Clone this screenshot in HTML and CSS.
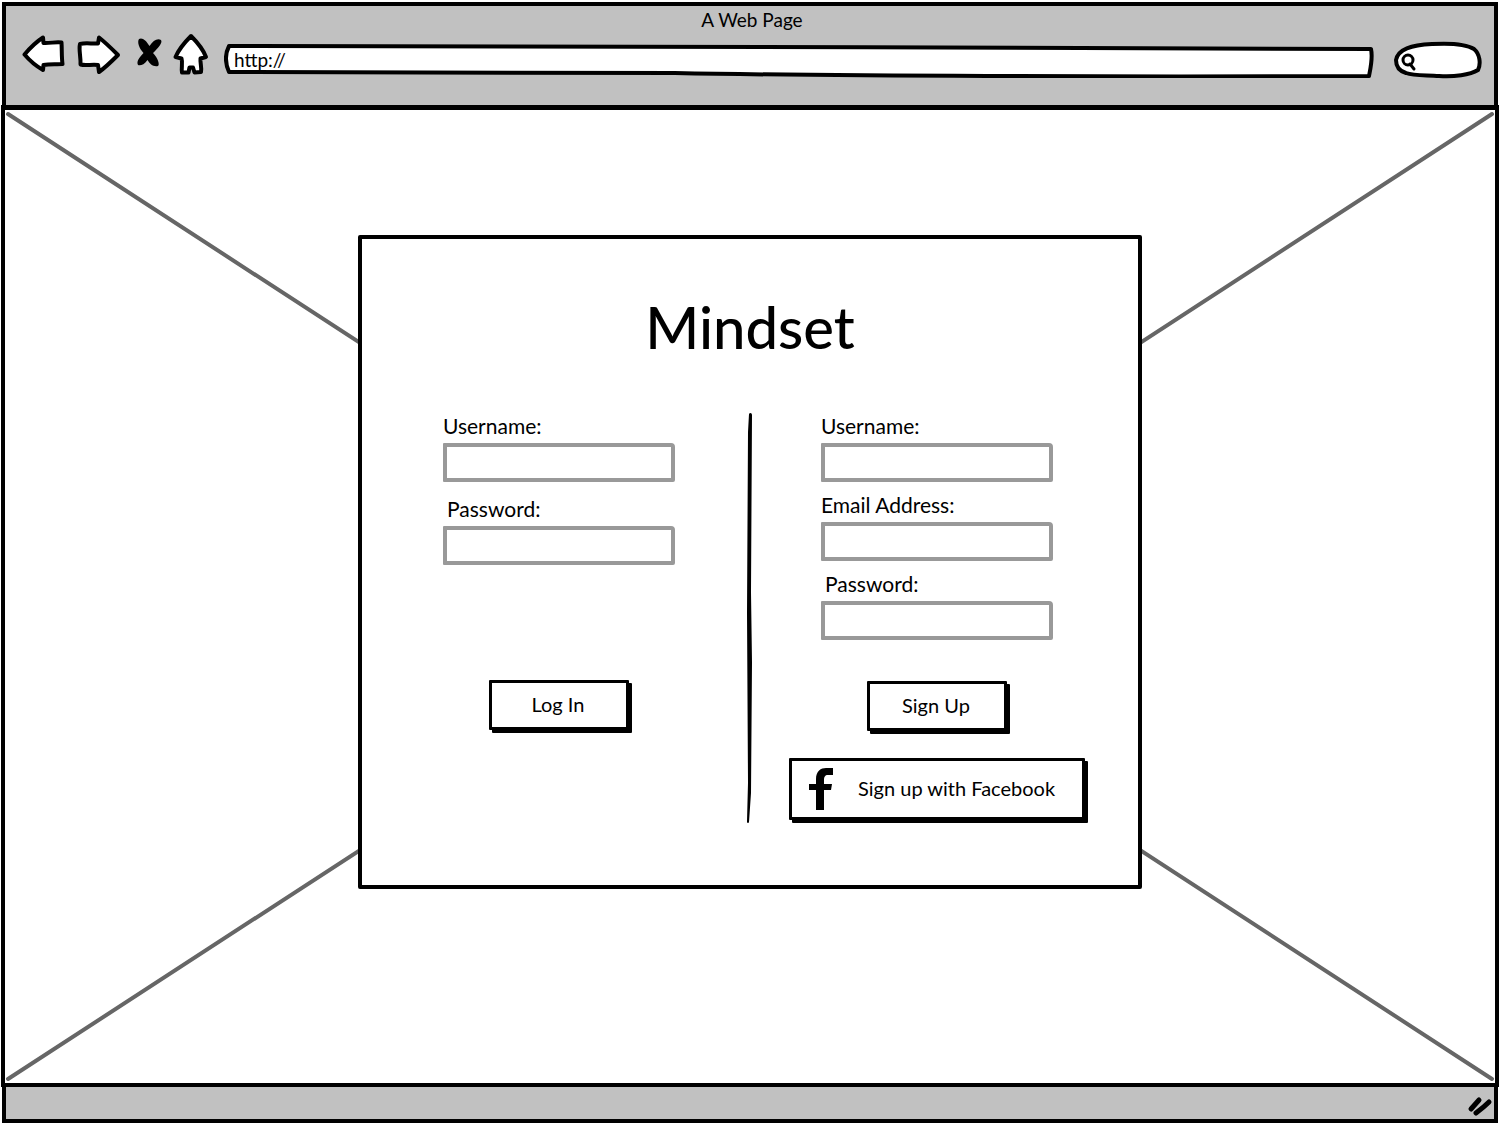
FILE: index.html
```html
<!DOCTYPE html>
<html lang="en">
<head>
  <meta charset="UTF-8" />
  <meta name="viewport" content="width=device-width, initial-scale=1" />
  <title>Mindset</title>
  <link rel="stylesheet" href="styles.css">
</head>
<body>
  <header class="browser-bar">
    <div class="page-title">A Web Page</div>
    <div class="toolbar">
      <nav class="nav-buttons">
        <button type="button" class="nav-btn" aria-label="Back">
          <svg width="46" height="48" viewBox="0 0 46 48">
            <path class="outline" d="M2.5 22.5C8 16 14 10 21 5.5L21.5 11C28 11.500 34 9.500 39.500 10.500C40 18 39.500 25 40.500 32C34.500 32.500 28 31.500 21.500 33L21 38C14 34 8 29 2.500 22.500Z" />
          </svg>
        </button>
        <button type="button" class="nav-btn" aria-label="Forward">
          <svg width="46" height="48" viewBox="0 0 46 48">
            <path class="outline" d="M4 12C10 10.500 16 12 22 11.500L23 5.500C30 11 36 17 42 23C36 29 30 35 23 40L22 33C16 32 10 34 4.500 32.500C5 25 2.500 18 4 12Z" />
          </svg>
        </button>
        <button type="button" class="nav-btn" aria-label="Stop">
          <svg width="34" height="48" viewBox="0 0 34 48">
            <path d="M9 7C12 5 16 8 19.500 14C23 9 27 6 31 8C33 11 28 16 23 21C28 26 30 33 28 34C23 35 20 32 17.500 28C14 33 10 34 8 33C6 29 10 25 13.500 21C9 16 7 10 9 7Z" />
          </svg>
        </button>
        <button type="button" class="nav-btn" aria-label="Home">
          <svg width="40" height="48" viewBox="0 0 40 48">
            <path class="outline" d="M19 4C25 10 31 17 34 25L28.500 26.500C28 31 30 36 29 40L22.500 40.500L21 35.500L17.500 35.500L16.500 40.500L10 40.500C9 36 11 31 9.500 26.500L3.500 25C7 17 13 10 19 4Z" />
          </svg>
        </button>
      </nav>
      <div class="url-bar">
        <svg class="sketch" viewBox="0 0 1148 34" preserveAspectRatio="none">
          <path class="outline" d="M5 2C300 3 800 3 1145 5C1147 14 1145 22 1143 32C900 33 600 32 450 29C300 28 150 28 5 28C1 19 1 10 5 2Z" />
        </svg>
        <input type="text" value="http://" aria-label="Address" />
      </div>
      <div class="search-bar">
        <svg class="sketch" viewBox="0 0 88 38" preserveAspectRatio="none">
          <path class="outline" d="M2 19C4 8 17 4 38 3C56 2 72 3 80 8C86 13 87 23 84 29C76 34 60 36 45 35C32 34 20 35 12 32C5 30 2 26 2 19Z" />
          <circle class="lens" cx="14" cy="19" r="5" />
          <path class="lens" d="M16 23L20 28" />
        </svg>
        <input type="search" aria-label="Search" />
      </div>
    </div>
  </header>

  <main class="viewport">
    <svg class="cross" viewBox="0 0 100 100" preserveAspectRatio="none">
      <line x1="0" y1="0" x2="100" y2="100" />
      <line x1="100" y1="0" x2="0" y2="100" />
    </svg>

    <section class="card">
      <h1>Mindset</h1>
      <div class="columns">
        <form class="login">
          <div class="fields">
            <div class="field">
              <label for="loginUsername">Username:</label>
              <input type="text" id="loginUsername" name="username" />
            </div>
            <div class="field">
              <label for="loginPassword" class="indent">Password:</label>
              <input type="password" id="loginPassword" name="password" />
            </div>
          </div>
          <button type="submit" class="btn">Log In</button>
        </form>

        <svg class="divider" viewBox="0 0 8 410" preserveAspectRatio="none">
          <path d="M5 2C6 0 8 1 8 3L7 180L8 250L7 380L5 409C4 411 3 410 3 408L4 370L3 200L4 20Z" />
        </svg>

        <form class="signup">
          <div class="fields">
            <div class="field">
              <label for="signupUsername">Username:</label>
              <input type="text" id="signupUsername" name="username" />
            </div>
            <div class="field">
              <label for="signupEmail">Email Address:</label>
              <input type="email" id="signupEmail" name="email" />
            </div>
            <div class="field">
              <label for="signupPassword" class="indent">Password:</label>
              <input type="password" id="signupPassword" name="password" />
            </div>
          </div>
          <button type="submit" class="btn">Sign Up</button>
          <button type="button" class="btn btn-facebook">
            <svg width="24" height="44" viewBox="0 0 24 44">
              <path d="M7 44V24H0V18H7V13C7 5 12 2 17 2H24V9H19C16 9 15 11 15 14V18H23L22 24H15V44Z" />
            </svg>
            Sign up with Facebook
          </button>
        </form>
      </div>
    </section>
  </main>

  <footer class="status-bar">
    <svg width="26" height="22" viewBox="0 0 26 22">
      <path class="grip" d="M4 14L12 5" />
      <path class="grip" d="M9 18C13 15 18 11 22 7" />
    </svg>
  </footer>
</body>
</html>
```

FILE: styles.css
```css
* {
  box-sizing: border-box;
}
body {
  font-family: Lato, 'Open Sans', sans-serif;
  font-size: 20px;
  line-height: 24px;
  color: #000;
  background: #fff;
  margin: 0;
  padding: 2px 1px;
  min-height: 100vh;
  display: flex;
  flex-direction: column;
}
h1 {
  font-size: 58px;
  line-height: 62px;
  font-weight: 500;
  text-align: center;
  margin: 0 0 54px;
}
button,
input {
  font: inherit;
  color: inherit;
}
.outline,
.lens {
  fill: #fff;
  stroke: #000;
  stroke-width: 4px;
  stroke-linejoin: round;
  stroke-linecap: round;
}
.lens {
  stroke-width: 3px;
}

/* browser chrome */
.browser-bar {
  background: #c1c1c1;
  border: 4px solid #000;
  border-bottom: none;
  padding: 2px 12px 25px 16px;
  margin: 0 1px;
}
.page-title {
  font-size: 19px;
  text-align: center;
}
.toolbar {
  display: flex;
  height: 48px;
}
.nav-buttons {
  display: flex;
  gap: 8px;
  margin-right: 12px;
}
.nav-btn {
  background: none;
  border: none;
  padding: 0;
  cursor: pointer;
}
.nav-btn svg {
  display: block;
}
.url-bar,
.search-bar {
  position: relative;
}
.url-bar {
  flex: 1;
  height: 34px;
  margin: 12px 20px 0 0;
}
.search-bar {
  width: 88px;
  height: 38px;
  margin-top: 9px;
}
.sketch {
  position: absolute;
  inset: 0;
  width: 100%;
  height: 100%;
}
.url-bar input,
.search-bar input {
  position: relative;
  display: block;
  width: 100%;
  height: 30px;
  background: none;
  border: none;
  padding: 0 10px;
  font-size: 19px;
}
.search-bar input {
  padding-left: 28px;
}

/* page area */
.viewport {
  flex: 1;
  position: relative;
  border: 4px solid #000;
  border-top-width: 5px;
  padding: 125px 20px 194px;
}
.cross {
  position: absolute;
  top: 4px;
  left: 3px;
  width: calc(100% - 6px);
  height: calc(100% - 8px);
  overflow: visible;
}
.cross line {
  stroke: #666;
  stroke-width: 4px;
  stroke-linecap: round;
  vector-effect: non-scaling-stroke;
}
.card {
  position: relative;
  max-width: 784px;
  margin: 0 auto;
  background: #fff;
  border: 4px solid #000;
  border-radius: 2px;
  padding: 57px 0 62px;
}
.columns {
  display: flex;
  justify-content: center;
  gap: 35px;
  padding-right: 4px;
}
.divider {
  width: 8px;
  height: 411px;
}
form {
  width: 300px;
  padding-top: 2px;
  display: flex;
  flex-direction: column;
  align-items: center;
}
.fields {
  width: 232px;
  min-height: 225px;
  margin-bottom: 41px;
  display: flex;
  flex-direction: column;
  gap: 11px;
}
.login .fields {
  gap: 15px;
}
label {
  display: block;
  font-size: 21px;
  margin-bottom: 5px;
}
.indent {
  padding-left: 4px;
}
.field input {
  display: block;
  width: 100%;
  height: 39px;
  padding: 0 8px;
  background: #fff;
  border: 4px solid #999;
  border-radius: 1px 4px 2px 1px;
}
.btn {
  width: 140px;
  height: 50px;
  padding: 0 2px 2px 0;
  background: #fff;
  border: 3px solid #000;
  border-radius: 1px;
  box-shadow: 3px 3px 0 #000;
  cursor: pointer;
}
.btn-facebook {
  width: 296px;
  height: 62px;
  margin-top: 27px;
  padding-left: 17px;
  display: flex;
  align-items: center;
  gap: 25px;
}

.status-bar {
  background: #c1c1c1;
  border: 4px solid #000;
  border-top: none;
  margin: 0 1px;
  height: 36px;
  padding: 8px 1px;
  display: flex;
  justify-content: flex-end;
}
.grip {
  fill: none;
  stroke: #000;
  stroke-width: 5px;
  stroke-linecap: round;
}
```
